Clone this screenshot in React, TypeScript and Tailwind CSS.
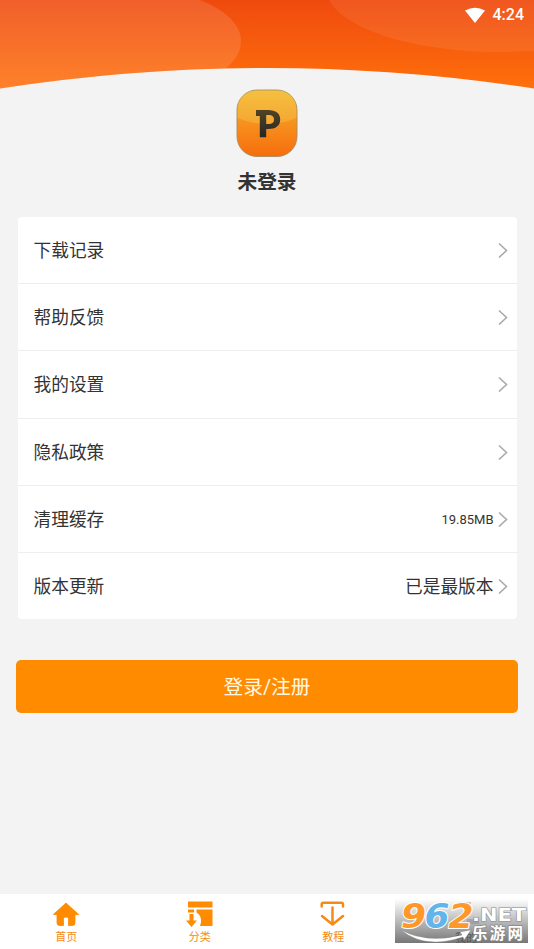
type MenuItem = {
  label: string;
  value?: string;
  valueClass?: string;
};

const menuItems: MenuItem[] = [
  { label: "下载记录" },
  { label: "帮助反馈" },
  { label: "我的设置" },
  { label: "隐私政策" },
  { label: "清理缓存", value: "19.85MB", valueClass: "pt-[1px] text-[13px]" },
  { label: "版本更新", value: "已是最版本", valueClass: "pt-[2px] text-[17.7px]" },
];

function Header() {
  return (
    <header className="relative h-[89px] shrink-0">
      <svg className="block h-full w-full" viewBox="0 0 534 89" preserveAspectRatio="none">
        <defs>
          <linearGradient id="sky" x1="0" y1="0" x2="0" y2="1">
            <stop offset="0" stopColor="#ef4a0e" />
            <stop offset="1" stopColor="#ff700c" />
          </linearGradient>
          <clipPath id="arc">
            <path d="M0 0H534V88.5Q400 68 267 68Q134 68 0 88.5Z" />
          </clipPath>
        </defs>
        <g clipPath="url(#arc)">
          <rect width="534" height="89" fill="url(#sky)" />
          <path d="M0 0H200C226 10 241 25 241 41C241 52 235 61 225 69L200 89H0Z" fill="#fff" fillOpacity=".12" />
          <path d="M329 0C345 30 415 52 500 52L534 51V0Z" fill="#fff" fillOpacity=".075" />
        </g>
      </svg>
      <div className="absolute right-[10px] top-[4px] flex items-center gap-[8px] text-white">
        <svg className="h-[16px] w-[20px]" viewBox="0 0 20 16" fill="currentColor">
          <path d="M0 3.6Q10-2.2 20 3.6L10 16Z" />
        </svg>
        <span className="text-[16px] font-medium leading-[21px]">4:24</span>
      </div>
    </header>
  );
}

function AppLogo() {
  return (
    <svg className="h-[68px] w-[62px]" viewBox="0 0 62 68">
      <defs>
        <linearGradient id="tile" x1="0" y1="0" x2="0" y2="1">
          <stop offset="0" stopColor="#f6b52f" />
          <stop offset="1" stopColor="#f66d0c" />
        </linearGradient>
        <linearGradient id="ink" x1="0" y1="0" x2="0" y2="1">
          <stop offset="0" stopColor="#514322" />
          <stop offset=".5" stopColor="#3b3528" />
          <stop offset="1" stopColor="#252629" />
        </linearGradient>
      </defs>
      <rect x="1" y="1" width="60" height="66.500" rx="20" fill="url(#tile)" stroke="#a58c62" strokeWidth=".9" />
      <path d="M1.5 29V21Q1.5 1.5 21 1.5H41Q60.500 1.5 60.500 21V29Q31 41 1.500 29Z" fill="#f4dd6b" fillOpacity=".28" />
      <path
        d="M20 21H32C40 21 44.200 24.500 44.200 30.500C44.200 36.800 39.800 40 32 40H30.200V48.300H23.800V27H20ZM30.200 26V35H32.500C36.500 35 38 33.400 38 30.500C38 27.500 36.300 26 32.500 26Z"
        fill="url(#ink)"
        fillRule="evenodd"
      />
    </svg>
  );
}

function Chevron() {
  return (
    <svg className="h-[16px] w-[10px]" viewBox="0 0 10 16" fill="none" stroke="#aaa" strokeWidth="1.600">
      <path d="M1 1.500L8.500 8.500L1 15.500" />
    </svg>
  );
}

function HomeIcon() {
  return (
    <svg className="h-[26px] w-[28px]" viewBox="0 0 28 26" fill="#ff8c00">
      <path
        d="M14 2L1.300 13.500H5V22Q5 24.500 7.500 24.500H11.500V17.500Q11.500 16 14 16T16.500 17.500V24.500H20.500Q23 24.500 23 22V13.500H26.700Z"
        stroke="#ff8c00"
        strokeWidth=".8"
        strokeLinejoin="round"
      />
    </svg>
  );
}

function CategoryIcon() {
  return (
    <svg className="h-[26px] w-[28px]" viewBox="0 0 28 26" fill="#ff8c00">
      <path d="M2 .5H26.500V6.500H2ZM2 8.500H8V11.500H2ZM10.500 8.500H26.500V25H14Q16.500 18 13 13.500L10.500 11.500ZM3.500 13H7.500V19.500H11L5.500 26L0 19.500H3.500Z" />
    </svg>
  );
}

function CourseIcon() {
  return (
    <svg
      className="h-[26px] w-[28px]"
      viewBox="0 0 28 26"
      fill="none"
      stroke="#f58a14"
      strokeWidth="2.500"
      strokeLinecap="round"
      strokeLinejoin="round"
    >
      <path d="M2.700 5.500V3Q2.700 1.700 4.500 1.700H22Q24 1.700 24 3V5.500M13.500 6.500V23.500M3 15L13.500 23.500L24 15" />
    </svg>
  );
}

function SiteBadge() {
  return (
    <svg className="h-[44px] w-[133px]" viewBox="0 0 133 44">
      <defs>
        <linearGradient id="steel" x1="0" y1="0" x2="0" y2="1">
          <stop offset="0" stopColor="#fff" />
          <stop offset="1" stopColor="#777" />
        </linearGradient>
      </defs>
      <rect width="133" height="44" fill="url(#steel)" />
      <text x="60" y="43" fontSize="11" fill="#555" fontFamily="Noto Sans CJK SC, sans-serif">我的</text>
      <path d="M64 3H76V7H64ZM72 20H84V25H72Z" fill="#777" fillOpacity=".35" />
      <g
        fontFamily="DejaVu Sans, sans-serif"
        fontStyle="italic"
        fontWeight="700"
        fontSize="33.500"
        stroke="#fff"
        strokeWidth="2"
        strokeLinejoin="round"
        paintOrder="stroke"
      >
        <text x="6" y="28.500" fill="#ff9829" textLength="25" lengthAdjust="spacingAndGlyphs">9</text>
        <text x="29.500" y="28.500" fill="#62b5ea" textLength="25" lengthAdjust="spacingAndGlyphs">6</text>
        <text x="53.500" y="28.500" fill="#ff9829" textLength="25" lengthAdjust="spacingAndGlyphs">2</text>
      </g>
      <path d="M6 31Q32 45 67 36L65 33L76 31L69 41L68 38Q30 51 6 31Z" fill="#fff" stroke="#888" strokeWidth=".4" />
      <g fill="#fff" stroke="#888" paintOrder="stroke">
        <text
          x="77"
          y="21.500"
          fontFamily="DejaVu Sans, sans-serif"
          fontSize="18.500"
          fontWeight="700"
          strokeWidth="1.100"
          textLength="54"
          lengthAdjust="spacingAndGlyphs"
        >
          .NET
        </text>
        <text x="77" y="40" fontFamily="Noto Sans CJK SC, sans-serif" fontSize="15.500" fontWeight="700" strokeWidth="1.300" textLength="51">
          乐游网
        </text>
      </g>
    </svg>
  );
}

const tabs = [
  { label: "首页", icon: <HomeIcon /> },
  { label: "分类", icon: <CategoryIcon /> },
  { label: "教程", icon: <CourseIcon /> },
];

export default function App() {
  return (
    <div className="flex h-[949px] w-full flex-col overflow-hidden bg-[#f3f3f3] font-[Roboto,'Noto_Sans_CJK_SC',sans-serif] text-[#333]">
      <Header />

      <main className="flex flex-1 flex-col">
        <div className="flex flex-col items-center">
          <AppLogo />
          <h1 className="mt-[11px] text-[19.7px] font-bold leading-[30px]">未登录</h1>
        </div>

        <div className="ml-[18px] mr-[17.5px] mt-[19px] overflow-hidden rounded-[4px] bg-white">
          {menuItems.map((item) => (
            <button
              key={item.label}
              className="flex h-[67.2px] w-full items-center justify-between border-b border-[#eeeeee] pl-[15.5px] pr-[9px] text-left last:h-[66.5px] last:border-b-0"
            >
              <span className="pt-[2px] text-[17.7px] leading-[26px]">{item.label}</span>
              <span className="flex items-center gap-[4px]">
                {item.value && <span className={item.valueClass}>{item.value}</span>}
                <Chevron />
              </span>
            </button>
          ))}
        </div>

        <button className="mx-[16.4px] mt-[40.5px] h-[53px] rounded-[5px] bg-[#ff8c00] pt-[3px] text-[19.7px] text-[#fff8e5]">
          登录/注册
        </button>
      </main>

      <nav className="grid h-[55px] shrink-0 grid-cols-4 bg-white text-[#f58a14]">
        {tabs.map((tab) => (
          <button key={tab.label} className="flex flex-col items-center pr-[1px] pt-[7px]">
            {tab.icon}
            <span className="mt-[3px] text-[11px] leading-[16px]">{tab.label}</span>
          </button>
        ))}
        <div className="-ml-[5.5px] pt-[5px]">
          <SiteBadge />
        </div>
      </nav>
    </div>
  );
}
